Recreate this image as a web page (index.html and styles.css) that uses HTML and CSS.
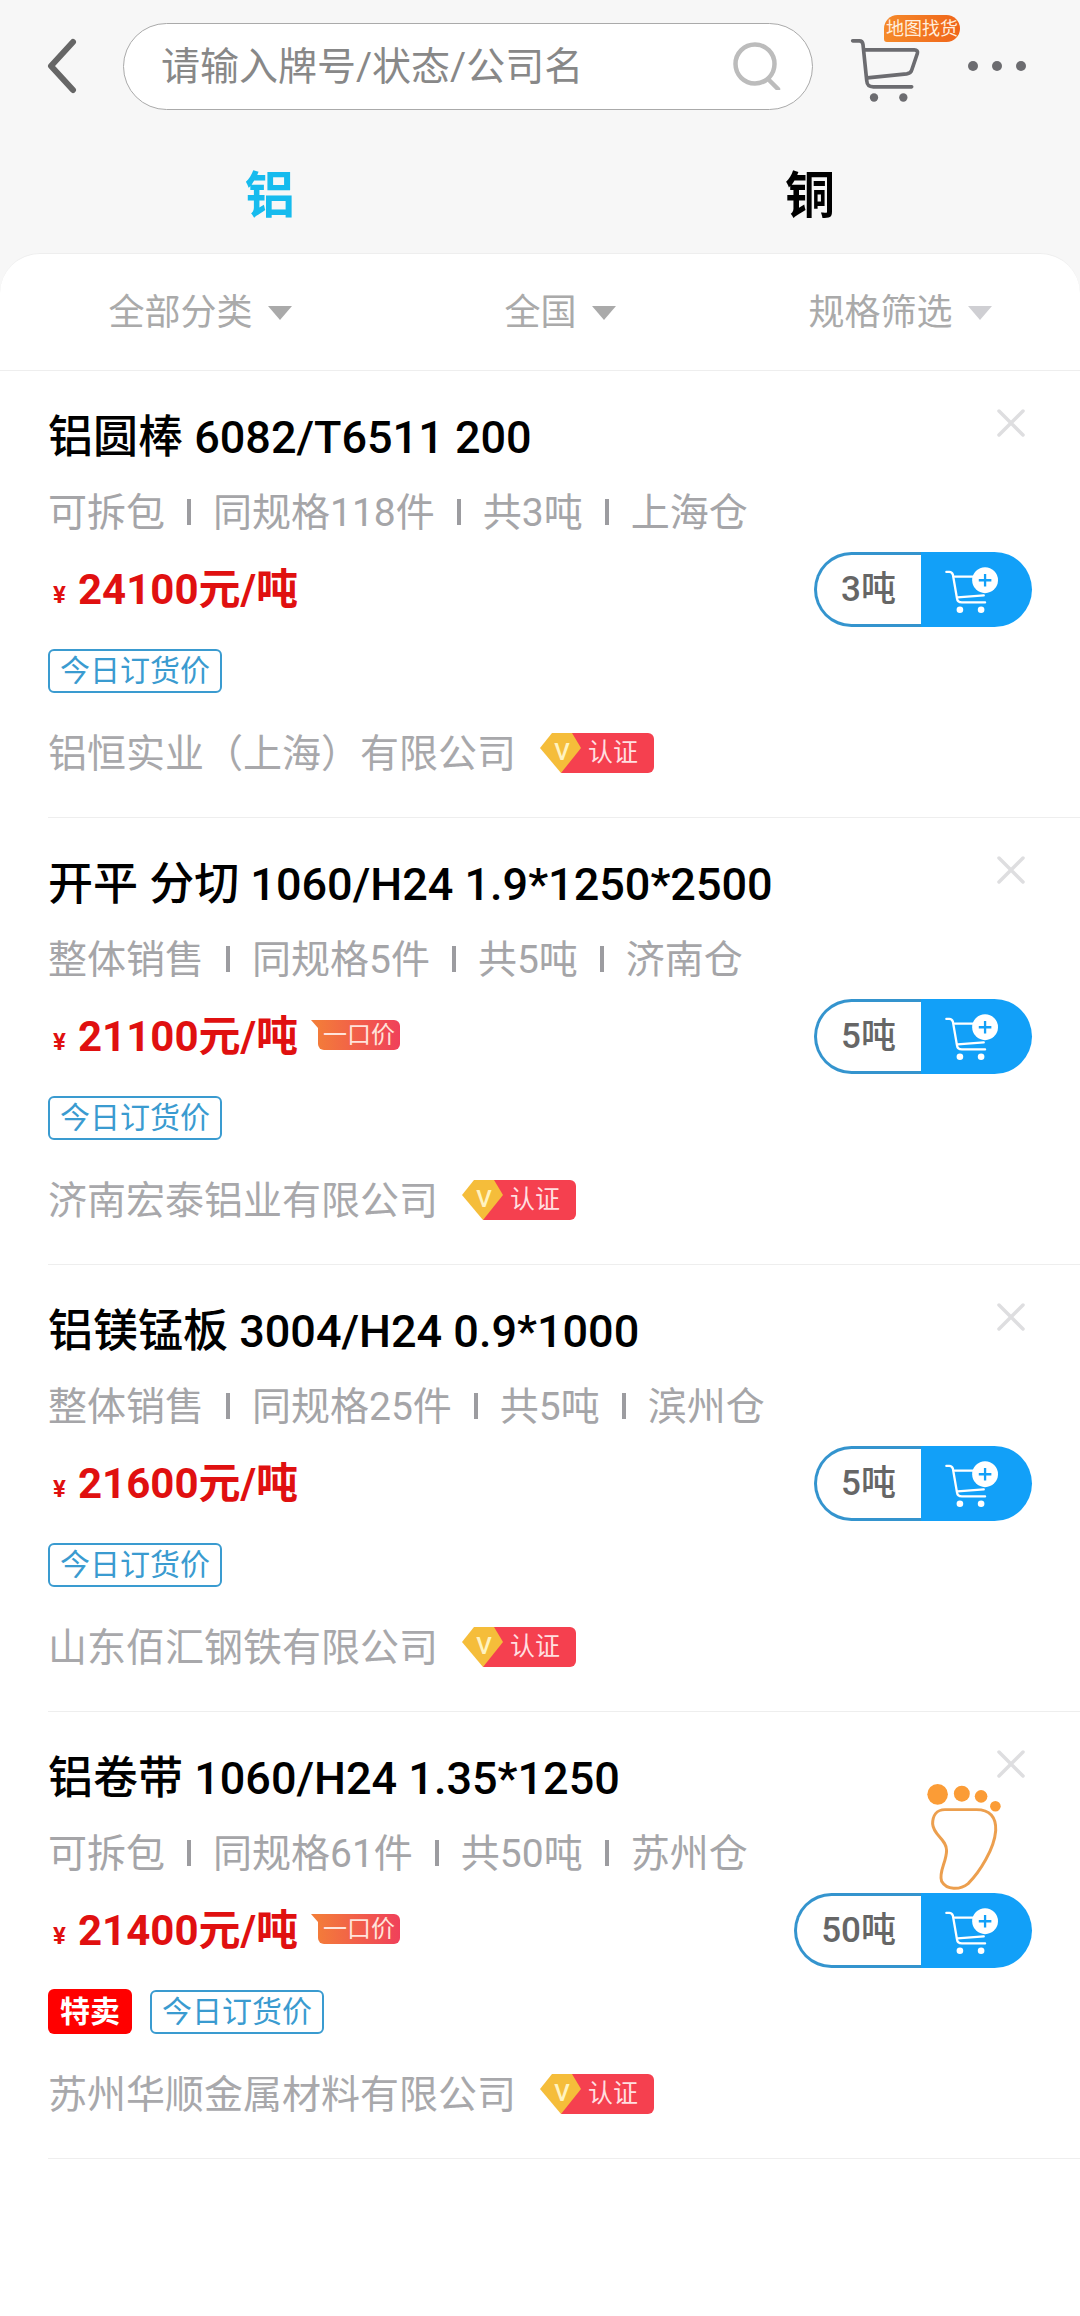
FILE: index.html
```html
<!DOCTYPE html>
<html lang="zh-CN">
<head>
<meta charset="utf-8">
<title>现货</title>
<link rel="stylesheet" href="styles.css">
</head>
<body>
<div class="page">
  <header class="topbar">
    <svg class="back" viewBox="0 0 31 56" width="31" height="56"><path d="M27 4 L5 28 L27 52" fill="none" stroke="#666" stroke-width="6" stroke-linecap="round" stroke-linejoin="round"/></svg>
    <div class="search">
      <span class="search-text">请输入牌号/状态/公司名</span>
      <svg class="search-icon" viewBox="0 0 50 48" width="50" height="48"><circle cx="23" cy="22" r="19.5" fill="none" stroke="#bcbcbc" stroke-width="4.5"/><path d="M36 37 L46 47" stroke="#bcbcbc" stroke-width="4.5" stroke-linecap="round"/></svg>
    </div>
    <div class="cart">
      <svg viewBox="90 100 210 200" width="70" height="67"><path d="M98 117 H118 C125 117 128 120 129 128 L140 235 C141 250 146 255 160 255 H275" fill="none" stroke="#6c6c70" stroke-width="11" stroke-linecap="round"/><path d="M132 144 H283 C291 144 294 149 292 155 L275 205 C273 213 268 215 260 216 L142 228" fill="none" stroke="#6c6c70" stroke-width="11" stroke-linecap="round"/><circle cx="162" cy="287" r="12.500" fill="#6c6c70"/><circle cx="250" cy="287" r="12.500" fill="#6c6c70"/></svg>
      <span class="map-badge">地图找货</span>
    </div>
    <div class="dots"><i></i><i></i><i></i></div>
  </header>

  <nav class="tabs">
    <span class="tab active">铝</span>
    <span class="tab">铜</span>
  </nav>

  <main class="panel">
    <div class="filters">
      <div class="filter first"><span>全部分类</span><i class="tri"></i></div>
      <div class="filter second"><span>全国</span><i class="tri"></i></div>
      <div class="filter third"><span>规格筛选</span><i class="tri light"></i></div>
    </div>

    <article class="item">
      <div class="info">
        <h2 class="title">铝圆棒 6082/T6511 200</h2>
        <div class="meta"><span>可拆包</span><i></i><span>同规格118件</span><i></i><span>共3吨</span><i></i><span>上海仓</span></div>
        <div class="price-row"><span class="yen">¥</span><span class="price">24100元/吨</span></div>
        <div class="tags"><span class="tag">今日订货价</span></div>
        <div class="company"><span class="name">铝恒实业（上海）有限公司</span>
          <span class="cert"><svg viewBox="0 0 114 40" width="114" height="40"><path d="M28 0 H108 a6 6 0 0 1 6 6 V34 a6 6 0 0 1 -6 6 H21 Z" fill="#f5404f"/><path d="M0 15 L12 0 H32 L41 15 L21 40 Z" fill="#f5bd3a"/></svg><b>V</b><em>认证</em></span>
        </div>
      </div>
      <div class="side">
        <svg class="close" viewBox="0 0 28 28" width="28" height="28"><path d="M2 2 L26 26 M26 2 L2 26" stroke="#dedee0" stroke-width="3.500" stroke-linecap="round"/></svg>
        <div class="buy"><span class="qty">3吨</span><span class="add"><svg viewBox="490 525 170 145" width="57" height="48"><path d="M499 543 H508 C514 543 517 546 519 552 L531 622 C532 631 537 635 546 635 H616" fill="none" stroke="#fff" stroke-width="7" stroke-linecap="round"/><path d="M524 557 H590 M533 620 L612 614" fill="none" stroke="#fff" stroke-width="7" stroke-linecap="round"/><circle cx="540" cy="657" r="10" fill="#fff"/><circle cx="604" cy="657" r="10" fill="#fff"/><circle cx="616" cy="568" r="39" fill="#fff"/><path d="M616 549 V587 M597 568 H635" stroke="#12a0f8" stroke-width="7"/></svg></span></div>
      </div>
    </article>

    <article class="item">
      <div class="info">
        <h2 class="title">开平 分切 1060/H24 1.9*1250*2500</h2>
        <div class="meta"><span>整体销售</span><i></i><span>同规格5件</span><i></i><span>共5吨</span><i></i><span>济南仓</span></div>
        <div class="price-row"><span class="yen">¥</span><span class="price">21100元/吨</span><span class="once">一口价</span></div>
        <div class="tags"><span class="tag">今日订货价</span></div>
        <div class="company"><span class="name">济南宏泰铝业有限公司</span>
          <span class="cert"><svg viewBox="0 0 114 40" width="114" height="40"><path d="M28 0 H108 a6 6 0 0 1 6 6 V34 a6 6 0 0 1 -6 6 H21 Z" fill="#f5404f"/><path d="M0 15 L12 0 H32 L41 15 L21 40 Z" fill="#f5bd3a"/></svg><b>V</b><em>认证</em></span>
        </div>
      </div>
      <div class="side">
        <svg class="close" viewBox="0 0 28 28" width="28" height="28"><path d="M2 2 L26 26 M26 2 L2 26" stroke="#dedee0" stroke-width="3.500" stroke-linecap="round"/></svg>
        <div class="buy"><span class="qty">5吨</span><span class="add"><svg viewBox="490 525 170 145" width="57" height="48"><path d="M499 543 H508 C514 543 517 546 519 552 L531 622 C532 631 537 635 546 635 H616" fill="none" stroke="#fff" stroke-width="7" stroke-linecap="round"/><path d="M524 557 H590 M533 620 L612 614" fill="none" stroke="#fff" stroke-width="7" stroke-linecap="round"/><circle cx="540" cy="657" r="10" fill="#fff"/><circle cx="604" cy="657" r="10" fill="#fff"/><circle cx="616" cy="568" r="39" fill="#fff"/><path d="M616 549 V587 M597 568 H635" stroke="#12a0f8" stroke-width="7"/></svg></span></div>
      </div>
    </article>

    <article class="item">
      <div class="info">
        <h2 class="title">铝镁锰板 3004/H24 0.9*1000</h2>
        <div class="meta"><span>整体销售</span><i></i><span>同规格25件</span><i></i><span>共5吨</span><i></i><span>滨州仓</span></div>
        <div class="price-row"><span class="yen">¥</span><span class="price">21600元/吨</span></div>
        <div class="tags"><span class="tag">今日订货价</span></div>
        <div class="company"><span class="name">山东佰汇钢铁有限公司</span>
          <span class="cert"><svg viewBox="0 0 114 40" width="114" height="40"><path d="M28 0 H108 a6 6 0 0 1 6 6 V34 a6 6 0 0 1 -6 6 H21 Z" fill="#f5404f"/><path d="M0 15 L12 0 H32 L41 15 L21 40 Z" fill="#f5bd3a"/></svg><b>V</b><em>认证</em></span>
        </div>
      </div>
      <div class="side">
        <svg class="close" viewBox="0 0 28 28" width="28" height="28"><path d="M2 2 L26 26 M26 2 L2 26" stroke="#dedee0" stroke-width="3.500" stroke-linecap="round"/></svg>
        <div class="buy"><span class="qty">5吨</span><span class="add"><svg viewBox="490 525 170 145" width="57" height="48"><path d="M499 543 H508 C514 543 517 546 519 552 L531 622 C532 631 537 635 546 635 H616" fill="none" stroke="#fff" stroke-width="7" stroke-linecap="round"/><path d="M524 557 H590 M533 620 L612 614" fill="none" stroke="#fff" stroke-width="7" stroke-linecap="round"/><circle cx="540" cy="657" r="10" fill="#fff"/><circle cx="604" cy="657" r="10" fill="#fff"/><circle cx="616" cy="568" r="39" fill="#fff"/><path d="M616 549 V587 M597 568 H635" stroke="#12a0f8" stroke-width="7"/></svg></span></div>
      </div>
    </article>

    <article class="item">
      <div class="info">
        <h2 class="title">铝卷带 1060/H24 1.35*1250</h2>
        <div class="meta"><span>可拆包</span><i></i><span>同规格61件</span><i></i><span>共50吨</span><i></i><span>苏州仓</span></div>
        <div class="price-row"><span class="yen">¥</span><span class="price">21400元/吨</span><span class="once">一口价</span></div>
        <div class="tags"><span class="tag hot">特卖</span><span class="tag">今日订货价</span></div>
        <div class="company"><span class="name">苏州华顺金属材料有限公司</span>
          <span class="cert"><svg viewBox="0 0 114 40" width="114" height="40"><path d="M28 0 H108 a6 6 0 0 1 6 6 V34 a6 6 0 0 1 -6 6 H21 Z" fill="#f5404f"/><path d="M0 15 L12 0 H32 L41 15 L21 40 Z" fill="#f5bd3a"/></svg><b>V</b><em>认证</em></span>
        </div>
      </div>
      <div class="side">
        <svg class="close" viewBox="0 0 28 28" width="28" height="28"><path d="M2 2 L26 26 M26 2 L2 26" stroke="#dedee0" stroke-width="3.500" stroke-linecap="round"/></svg>
        <div class="buy"><span class="qty">50吨</span><span class="add"><svg viewBox="490 525 170 145" width="57" height="48"><path d="M499 543 H508 C514 543 517 546 519 552 L531 622 C532 631 537 635 546 635 H616" fill="none" stroke="#fff" stroke-width="7" stroke-linecap="round"/><path d="M524 557 H590 M533 620 L612 614" fill="none" stroke="#fff" stroke-width="7" stroke-linecap="round"/><circle cx="540" cy="657" r="10" fill="#fff"/><circle cx="604" cy="657" r="10" fill="#fff"/><circle cx="616" cy="568" r="39" fill="#fff"/><path d="M616 549 V587 M597 568 H635" stroke="#12a0f8" stroke-width="7"/></svg></span></div>
      </div>
      <svg class="foot" viewBox="500 180 235 335" width="78" height="112"><circle cx="538" cy="216" r="31" fill="#fb9c36"/><circle cx="611" cy="214" r="24" fill="#fb9c36"/><circle cx="669" cy="222" r="19" fill="#fb9c36"/><circle cx="712" cy="252" r="16" fill="#fb9c36"/><path d="M560 262 H655 C695 262 715 285 713 325 C709 380 665 450 630 485 C605 505 565 505 550 478 C540 450 565 420 565 385 C565 350 525 340 523 305 C523 280 535 262 560 262 Z" fill="#fff" stroke="#ec9f4e" stroke-width="9"/></svg>
    </article>
  </main>
</div>
</body>
</html>
```

FILE: styles.css
```css
* { box-sizing: border-box; }
html, body { margin: 0; padding: 0; }
body {
  width: 1080px;
  height: 2316px;
  overflow: hidden;
  font-family: Roboto, "Noto Sans CJK SC", sans-serif;
}
.page {
  width: 1080px;
  height: 2316px;
  display: flex;
  flex-direction: column;
  background: #f7f7f7;
}

/* top bar */
.topbar {
  display: flex;
  align-items: center;
  height: 86px;
  margin-top: 23px;
  padding-left: 46px;
}
.back { flex: none; }
.search {
  flex: none;
  width: 690px;
  height: 87px;
  margin-left: 46px;
  padding: 0 30px 0 37px;
  display: flex;
  align-items: center;
  justify-content: space-between;
  background: #fff;
  border: 1.5px solid #aaa;
  border-radius: 44px;
}
.search-text { font-size: 39px; color: #888; margin-top: -6px; }
.cart {
  position: relative;
  flex: none;
  width: 70px;
  height: 67px;
  margin-left: 37px;
  margin-top: 4px;
}
.cart svg { display: block; }
.map-badge {
  position: absolute;
  left: 34px;
  top: -20px;
  width: 76px;
  height: 27px;
  border-radius: 14px 14px 14px 3px;
  background: linear-gradient(90deg, #f58a2a, #f0651a);
  color: #ffeedd;
  font-size: 18px;
  line-height: 27px;
  text-align: center;
  white-space: nowrap;
}
.dots { display: flex; gap: 14px; margin-left: 48px; }
.dots i { width: 10px; height: 10px; border-radius: 50%; background: #6c6c70; }

/* tabs */
.tabs {
  display: grid;
  grid-template-columns: 1fr 1fr;
  height: 120px;
  margin-top: 24px;
  align-items: center;
  text-align: center;
}
.tab { font-size: 50px; font-weight: 700; color: #000; line-height: 120px; margin-top: 3px; }
.tab.active { color: #16bbee; }

/* panel */
.panel {
  flex: 1;
  background: #fff;
  border-top: 1px solid #eee;
  border-radius: 40px 40px 0 0;
}
.filters {
  display: grid;
  grid-template-columns: 400px 320px 360px;
  height: 117px;
  border-bottom: 1px solid #eee;
  align-items: center;
}
.filter {
  display: flex;
  align-items: center;
  justify-content: center;
  gap: 15px;
  font-size: 36px;
  color: #aaa;
}
.filter span { margin-top: -6px; }
.tri {
  width: 0;
  height: 0;
  border-left: 12.5px solid transparent;
  border-right: 12.5px solid transparent;
  border-top: 14px solid #aaa;
  margin-top: 2px;
}
.tri.light { border-top-color: #cfcfd3; }

/* items */
.item {
  position: relative;
  display: flex;
  justify-content: space-between;
  height: 447px;
  margin-left: 48px;
  padding: 37px 48px 0 0;
  border-bottom: 1px solid #eee;
}
.info { flex: 1; min-width: 0; }
.title {
  margin: 0;
  height: 60px;
  font-size: 45px;
  font-weight: 500;
  line-height: 60px;
  color: #000;
  white-space: nowrap;
}
.meta {
  display: flex;
  align-items: center;
  gap: 22px;
  height: 87px;
  font-size: 39px;
  color: #a5a5a8;
  white-space: nowrap;
}
.meta span { margin-top: -6px; }
.meta i { width: 4px; height: 26px; background: #9c9ca0; }
.price-row {
  display: flex;
  align-items: center;
  height: 70px;
  color: #e01010;
}
.yen { width: 30px; padding-left: 5px; font-size: 24px; font-weight: 700; margin-top: 10px; }
.price { font-size: 42px; font-weight: 700; line-height: 70px; }
.once {
  position: relative;
  width: 82px;
  height: 30px;
  margin: -4px 0 0 20px;
  border-radius: 0 6px 6px 6px;
  background: linear-gradient(90deg, #f37b3a, #f0405a);
  color: #ffe3da;
  font-size: 24px;
  font-weight: 400;
  line-height: 30px;
  text-align: center;
}
.once::before {
  content: "";
  position: absolute;
  left: -7px;
  top: 0;
  border-top: 8px solid #f37b3a;
  border-left: 7px solid transparent;
}
.tags { display: flex; gap: 18px; height: 44px; margin-top: 24px; }
.tag {
  display: block;
  height: 44px;
  width: 174px;
  border: 2px solid #3a9bd0;
  border-radius: 6px;
  color: #3a9bd0;
  font-size: 30px;
  line-height: 40px;
  text-align: center;
  white-space: nowrap;
}
.tag.hot {
  width: 84px;
  height: 45px;
  margin-top: -1px;
  border: 0;
  background: #f00;
  color: #fff;
  font-weight: 700;
  line-height: 45px;
}
.company {
  display: flex;
  align-items: center;
  gap: 24px;
  height: 60px;
  margin-top: 30px;
  font-size: 39px;
  color: #a8a8ab;
  white-space: nowrap;
}
.company .name { margin-top: -6px; }
.cert { position: relative; display: block; width: 114px; height: 40px; }
.cert svg { position: absolute; left: 0; top: 0; }
.cert b {
  position: absolute;
  left: 12px;
  top: 0;
  width: 20px;
  font-size: 24px;
  font-weight: 500;
  line-height: 38px;
  text-align: center;
  color: #fff3c0;
}
.cert em {
  position: absolute;
  left: 48px;
  top: 0;
  font-style: normal;
  font-size: 25px;
  line-height: 40px;
  color: #ffdfe0;
}
.side {
  display: flex;
  flex-direction: column;
  align-items: flex-end;
  flex: none;
  margin-top: 1px;
}
.close { display: block; margin-right: 7px; }
.buy {
  display: flex;
  height: 75px;
  margin-top: 115px;
}
.qty {
  display: block;
  padding: 0 25px 0 24px;
  border: 3px solid #3494ce;
  border-right: 0;
  border-radius: 38px 0 0 38px;
  background: #fff;
  color: #666;
  font-size: 35px;
  font-weight: 500;
  line-height: 69px;
}
.add {
  display: flex;
  align-items: center;
  justify-content: center;
  width: 111px;
  padding-right: 10px;
  background: #12a0f8;
  border-radius: 0 38px 38px 0;
}
.foot { position: absolute; right: 77px; top: 70px; }
```
